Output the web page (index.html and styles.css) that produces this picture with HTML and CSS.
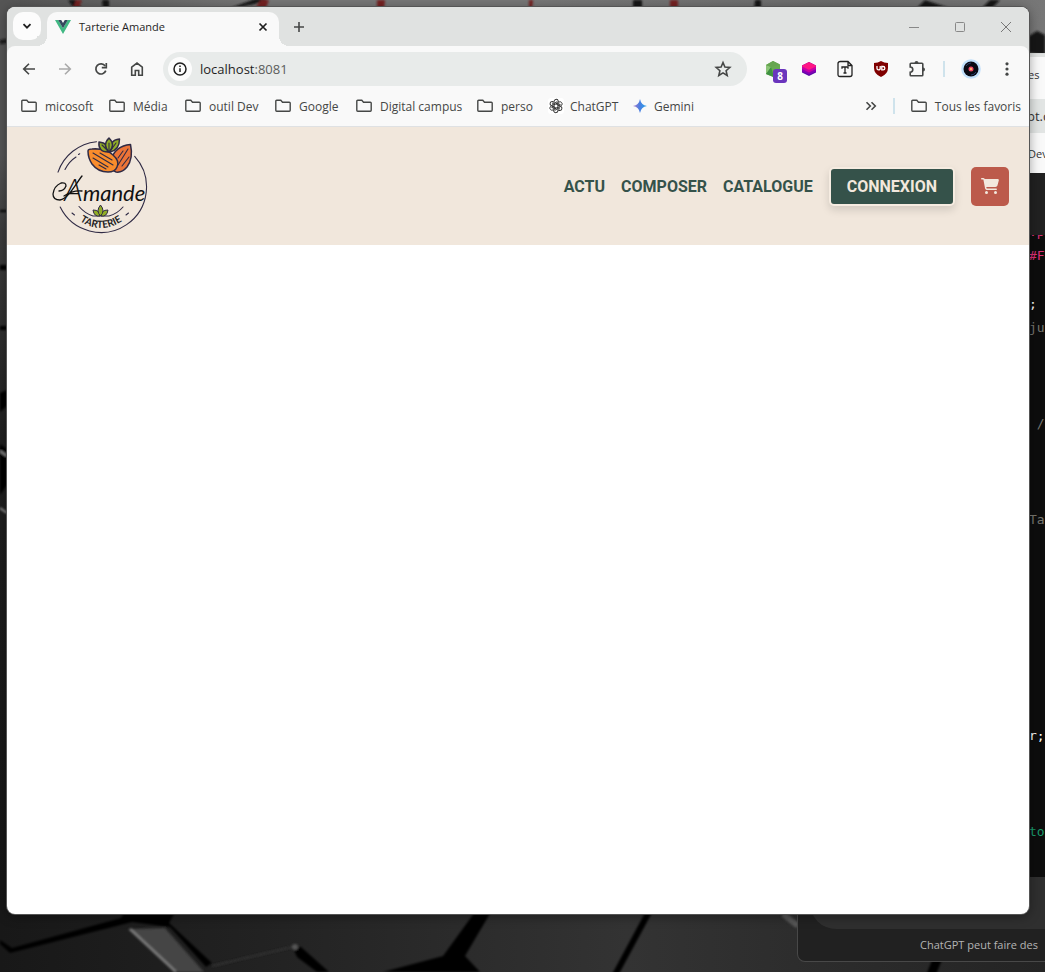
FILE: index.html
```html
<!DOCTYPE html>
<html lang="fr">
<head>
<meta charset="utf-8">
<title>Tarterie Amande</title>
<meta name="viewport" content="width=device-width, initial-scale=1">
<link rel="stylesheet" href="styles.css">
</head>
<body>
<svg width="0" height="0" class="defs" aria-hidden="true">
  <symbol id="folder" viewBox="0 0 16 16"><path d="M.8 3.2q0-.9.9-.9h4.1l1.700 1.900h6.800q.9 0 .9.900v7.200q0 .9-.9.900H1.700q-.9 0-.9-.9z" fill="none" stroke="#454746" stroke-width="1.400"/></symbol>
</svg>
<div class="desktop">
  <svg class="wallpaper" viewBox="0 0 1045 972" preserveAspectRatio="xMidYMid slice" aria-hidden="true">
    <defs>
      <linearGradient id="wl" x1="0" y1="0" x2="0" y2="1"><stop offset="0" stop-color="#555"/><stop offset=".16" stop-color="#555"/><stop offset=".24" stop-color="#3c3c3c"/><stop offset=".45" stop-color="#202020"/><stop offset="1" stop-color="#141414"/></linearGradient>
      <linearGradient id="wt"><stop offset="0" stop-color="#555"/><stop offset=".25" stop-color="#777"/><stop offset=".5" stop-color="#777"/><stop offset=".8" stop-color="#6c6c6c"/><stop offset="1" stop-color="#777"/></linearGradient>
      <linearGradient id="wb"><stop offset="0" stop-color="#181818"/><stop offset=".25" stop-color="#222"/><stop offset=".6" stop-color="#333"/><stop offset="1" stop-color="#242424"/></linearGradient>
      <filter id="soft" x="-5%" y="-5%" width="110%" height="110%"><feGaussianBlur stdDeviation="1"/></filter>
    </defs>
    <rect width="1045" height="972" fill="url(#wl)"/>
    <rect x="7" width="1038" height="70" fill="url(#wt)"/>
    <rect y="900" width="1045" height="72" fill="url(#wb)"/>
    <g filter="url(#soft)">
      <path d="M0 40l7-1v4l-7 1zM68 0h8l7 10h-8zM102 0h7v10h-6zM225 10l30-6 12-5h-12zM633 0h9v10h-9zM755 0h6v10h-7zM925 0l30 10h-40zM990 0h10l-12 12h-10zM1029 53V36l8-5 8 4v20z" fill="#151515"/>
      <path d="M72 10l4-10h6l-4 10zM255 8l6-8h8l-3 8zM377 10V0h8l-1 10zM529 10V0h4l-1 10zM670 10V0h8v10z" fill="#762323"/>
      <path d="M0 210h7v2H0zM0 265h7v5H0zM0 326h7v4H0zM0 393l7-3v16l-7 6zM0 444l7 5v36l-7 10z" fill="#030303"/>
      <path d="M0 451l7 5M0 508l7 5" stroke="#999" stroke-width="2"/>
      <path d="M0 944l10 9 122-31 38 5 36 40 6-4-43-40 10-18h-50l-8 13L12 948l-12-8zM480 905l-37 51-60 16h97l-15-16 30-51zM293 948l8-1 28 25h-12l-20-15z" fill="#000"/>
      <path d="M128 929l50 43h26l-39-44z" fill="#444"/><path d="M130 929l46 43" stroke="#777" stroke-width="3"/>
      <circle cx="295" cy="947" r="3" fill="#555"/><path d="M212 966l80-19" stroke="#303030" stroke-width="2"/>
      <path d="M650 910l-35 65" stroke="#000" stroke-width="6"/><path d="M783 914l15 12" stroke="#555" stroke-width="6"/><path d="M939 955l-8 20" stroke="#000" stroke-width="9"/>
    </g>
  </svg>

  <section class="window back-window" aria-label="ChatGPT">
    <div class="back-tabs"><span>es</span></div>
    <div class="back-address"><span>pt.c</span></div>
    <div class="back-bookmarks"><span>Dev</span></div>
    <div class="back-head"></div>
    <pre class="back-code"><code><span class="pink">.p</span>
<span class="pink">#F</span>

<span class="white">;</span>
ju



 /



Ta








<span class="white">r;</span>



<span class="green">to</span></code></pre>
    <div class="back-composer"></div>
    <p class="back-note">ChatGPT peut faire des</p>
  </section>

  <section class="window browser" aria-label="Navigateur">
    <div class="tabstrip">
      <button class="tab-search" aria-label="Rechercher dans les onglets"><svg viewBox="0 0 12 12" width="12" height="12"><path d="M2.500 4.200L6 7.700l3.500-3.500" fill="none" stroke="#1f1f1f" stroke-width="1.800"/></svg></button>
      <div class="tab">
        <svg viewBox="0 0 16 14" width="16" height="14"><path d="M0 0h3.300L8 8.200 12.700 0H16L8 14z" fill="#41b883"/><path d="M3.200 0h3L8 3l1.800-3h3L8 8.300z" fill="#35495e"/></svg>
        <span class="tab-title">Tarterie Amande</span>
        <button class="plain" aria-label="Fermer l’onglet"><svg viewBox="0 0 12 12" width="12" height="12"><path d="M2.500 2.500l7 7m0-7l-7 7" stroke="#1f1f1f" stroke-width="1.700"/></svg></button>
      </div>
      <button class="plain new-tab" aria-label="Nouvel onglet"><svg viewBox="0 0 12 12" width="12" height="12"><path d="M6 1v10M1 6h10" stroke="#454746" stroke-width="1.600"/></svg></button>
      <div class="captions">
        <button class="plain" aria-label="Réduire"><svg viewBox="0 0 12 12" width="12" height="12"><path d="M1 6.500h10" stroke="#888"/></svg></button>
        <button class="plain" aria-label="Agrandir"><svg viewBox="0 0 12 12" width="12" height="12"><rect x="1.500" y="1.500" width="9" height="9" rx="1" fill="none" stroke="#888"/></svg></button>
        <button class="plain" aria-label="Fermer"><svg viewBox="0 0 12 12" width="12" height="12"><path d="M1 1l10 10M11 1L1 11" stroke="#777"/></svg></button>
      </div>
    </div>

    <div class="toolbar">
      <div class="tools">
        <button class="tool" aria-label="Précédent"><svg viewBox="0 0 16 16" width="16" height="16"><path d="M14 8H3M8 2.700L2.700 8 8 13.300" fill="none" stroke="#454746" stroke-width="1.600"/></svg></button>
        <button class="tool" aria-label="Suivant" disabled><svg viewBox="0 0 16 16" width="16" height="16"><path d="M2 8h11M8 2.700L13.300 8 8 13.300" fill="none" stroke="#aaa" stroke-width="1.600"/></svg></button>
        <button class="tool" aria-label="Actualiser"><svg viewBox="0 0 16 16" width="16" height="16"><path d="M12.800 9.600A5.100 5.100 0 1 1 12.200 5" fill="none" stroke="#454746" stroke-width="1.700"/><path d="M13.300 2v4.700H8.800" fill="none" stroke="#454746" stroke-width="1.700"/></svg></button>
        <button class="tool" aria-label="Accueil"><svg viewBox="0 0 16 16" width="16" height="16"><path d="M2.700 6.200L8 2l5.300 4.200v8H9.700V9.500H6.300v4.700H2.700z" fill="none" stroke="#454746" stroke-width="1.600"/></svg></button>
      </div>
      <div class="omnibox">
        <button class="site-info" aria-label="Infos sur le site"><svg viewBox="0 0 16 16" width="16" height="16"><circle cx="8" cy="8" r="6" fill="none" stroke="#1f1f1f" stroke-width="1.500"/><path d="M8 7.200v3.700M8 4.600v1.500" stroke="#1f1f1f" stroke-width="1.500"/></svg></button>
        <div class="url" role="textbox" aria-label="Adresse">localhost<span>:8081</span></div>
        <button class="plain star" aria-label="Ajouter aux favoris"><svg viewBox="0 0 18 18" width="18" height="18"><path d="M9 2.500l1.900 4.600 4.900.4-3.700 3.200 1.100 4.800L9 12.900l-4.200 2.600 1.100-4.800-3.700-3.200 4.900-.4z" fill="none" stroke="#454746" stroke-width="1.600"/></svg></button>
      </div>
      <div class="tools">
        <button class="tool" aria-label="Extension"><svg viewBox="0 0 16 16" width="16" height="16"><path d="M8 0l7 3.500v8L8 16l-7-3V4z" fill="#67aa51"/><path d="M1 4l5 2-4 7-1-1z" fill="#8cc477"/><path d="M1 13l5-7 3 10z" fill="#3f9142"/><path d="M8 0l7 3.500L6 6 1 4z" fill="#66a550"/></svg><span class="badge">8</span></button>
        <button class="tool" aria-label="Requestly"><svg viewBox="0 0 16 16" width="16" height="16"><path d="M8 1l7 3.500v7L8 15l-7-3.500v-7z" fill="#5d0aa8"/><path d="M1 7.500l7 3 7-3v3l-7 3-7-3z" fill="#8600b4"/><path d="M1 5l7 3.500L15 5v3l-7 3.500L1 8z" fill="#c900a7"/><path d="M8 1l7 3.500v1L8 9 1 5.500v-1z" fill="#ff1684"/></svg></button>
        <button class="tool" aria-label="Texte"><svg viewBox="0 0 16 18" width="16" height="18"><path d="M3.500 1.500h7.500l4 4v9q0 2-2 2H3q-2 0-2-2V3.500q0-2 2.500-2zM11 1.500v4h4" fill="none" stroke="#222" stroke-width="1.300"/><path d="M5 8.800V7h6v1.800M8 7v6M6.500 13h3" fill="none" stroke="#222" stroke-width="1.300"/></svg></button>
        <button class="tool" aria-label="uBlock"><svg viewBox="0 0 16 16" width="16" height="16"><path d="M8 0q3 2 7 2v5q0 6-7 9-7-3-7-9V2q4 0 7-2z" fill="#800000"/><path d="M4 5v2.500q0 1.400 1.600 1.400T7.200 7.500V5" fill="none" stroke="#fff" stroke-width="1.300"/><path d="M8.800 5.500h1.400a1.600 1.600 0 0 1 0 3.300H8.800z" fill="none" stroke="#fff" stroke-width="1.300"/></svg></button>
        <button class="tool" aria-label="Extensions"><svg viewBox="0 0 18 18" width="18" height="18"><path d="M3 3.300h11q.8 0 .8.8v10.800q0 .8-.8.800H3q-.8 0-.8-.8V12.200a2.600 2.600 0 0 0 0-5.200V4.100q0-.8.800-.8z" fill="none" stroke="#454746" stroke-width="1.600"/><path d="M6.500 3.500V3a2 2 0 0 1 4 0v.5zM14.500 7.500h.5a2 2 0 0 1 0 4h-.5z" fill="#454746"/></svg></button>
        <span class="divider wide"></span>
        <button class="tool" aria-label="Profil"><svg viewBox="0 0 20 20" width="20" height="20"><circle cx="10" cy="10" r="9.800" fill="#c2e0fb"/><circle cx="10" cy="10" r="7.500" fill="#090913"/><path d="M5 7a6 6 0 0 1 5-3M15 13a6 6 0 0 1-5 3" stroke="#263b68" fill="none"/><circle cx="10" cy="10" r="2.500" fill="#ef4964"/><circle cx="10" cy="10" r="1" fill="#ffd26b"/></svg></button>
        <button class="tool" aria-label="Menu"><svg viewBox="0 0 16 16" width="16" height="16" fill="#454746"><circle cx="8" cy="2.800" r="1.600"/><circle cx="8" cy="8" r="1.600"/><circle cx="8" cy="13.200" r="1.600"/></svg></button>
      </div>
    </div>

    <nav class="bookmarks" aria-label="Favoris">
      <div class="bookmark-list">
        <a href="#"><svg width="16" height="16"><use href="#folder"/></svg>micosoft</a>
        <a href="#"><svg width="16" height="16"><use href="#folder"/></svg>Média</a>
        <a href="#"><svg width="16" height="16"><use href="#folder"/></svg>outil Dev</a>
        <a href="#"><svg width="16" height="16"><use href="#folder"/></svg>Google</a>
        <a href="#"><svg width="16" height="16"><use href="#folder"/></svg>Digital campus</a>
        <a href="#"><svg width="16" height="16"><use href="#folder"/></svg>perso</a>
        <a href="#" class="site"><svg viewBox="0 0 16 16" width="16" height="16"><rect width="16" height="16" rx="3" fill="#fff"/><g fill="none" stroke="#333" stroke-width="1.200" transform="translate(1.600 1.600) scale(.8)"><path id="petal" d="M8 5.200l3.600-2.100a2.700 2.700 0 0 1 3.700 3.700q-.4.800-1.500 1.200M5.600 9.400V4.800L9.700 2.400"/><use href="#petal" transform="rotate(60 8 8)"/><use href="#petal" transform="rotate(120 8 8)"/><use href="#petal" transform="rotate(180 8 8)"/><use href="#petal" transform="rotate(240 8 8)"/><use href="#petal" transform="rotate(300 8 8)"/></g></svg>ChatGPT</a>
        <a href="#" class="site"><svg viewBox="0 0 16 16" width="16" height="16"><defs><linearGradient id="gem"><stop offset="0" stop-color="#a978c8"/><stop offset=".5" stop-color="#467fe2"/><stop offset="1" stop-color="#28a6e8"/></linearGradient></defs><path d="M8 1q1 6 7 7-6 1-7 7-1-6-7-7 6-1 7-7z" fill="url(#gem)"/></svg>Gemini</a>
      </div>
      <div class="bookmark-end">
        <button class="plain" aria-label="Plus de favoris"><svg viewBox="0 0 12 12" width="12" height="12"><path d="M1.500 2.200L5.300 6 1.500 9.800M6.500 2.200L10.300 6 6.500 9.800" fill="none" stroke="#454746" stroke-width="1.600"/></svg></button>
        <span class="divider"></span>
        <a href="#"><svg width="16" height="16"><use href="#folder"/></svg>Tous les favoris</a>
      </div>
    </nav>

    <main class="page">
      <header class="site-header">
        <a href="#" aria-label="Amande Tarterie">
          <svg class="logo" viewBox="12 11 98 98">
            <g fill="none" stroke="#302b45" stroke-width="1.100" stroke-linecap="round">
              <path d="M19 46.100A45.500 45.500 0 0 1 57.500 15.700M95.700 30.400A45.500 45.500 0 1 1 21.200 81.100"/>
              <path d="M26 43.500q4-8 11-12.500M39.500 28.500l1.200-.7M40 80.500q6 7 14 9.500h16q8-2 14-9"/>
              <path d="M33 87l2.500 2M87 89l2.500-2"/>
            </g>
            <g stroke="#302b45" stroke-width="1.500" stroke-linejoin="round">
              <path d="M91.500 18.500q3 14-3.500 22.500-5 6-11 5-7-2-5-12 4-14 19.500-15.500z" fill="#ec7437"/>
              <path d="M49 25q0-2 4-2 14-1 21 6 7 6 4 12-2 5-9 5-10 0-16-8-4-6-4-13z" fill="#f98c2c"/>
              <path d="M69 26q-10 0-9-10 10 1 9 10zM71 26q-1-12 9.500-13 0 11-9.500 13z" fill="#91ad26"/>
              <path d="M70 26q-7-7 0-14 7 7 0 14z" fill="#91ad26"/>
            </g>
            <path d="M54 27l20 12M61 27l12 7M54 32l15 9M60 39l7 4M89 23L79 39M84 25l-5 7M90 31l-7 9M63 19l5 5M70 17v7M77 17l-5 7" fill="none" stroke="#302b45" stroke-width="1.100" stroke-linecap="round"/>
            <g fill="#91ad26" stroke="#302b45" stroke-width="1"><path d="M61 90q-6 1-7-6 7 0 7 6zM62 90q6 1 7-6-7 0-7 6z"/><path d="M61.500 90q-5-5 0-11 5 6 0 11z"/></g>
            <path d="M43 50C36 59 29 73 21 74q-7 0-7-6 1-8 8-11 5-1 5 3-2 5-7 5M25 70q9-6 18-5" fill="none" stroke="#111" stroke-width="1.300" stroke-linecap="round"/>
            <text class="logo-name" x="25" y="75">A<tspan class="logo-rest">mande</tspan></text>
            <path id="seal" d="M33 89Q62 115 91 89" fill="none"/>
            <text class="logo-sub"><textPath href="#seal" startOffset="50%" text-anchor="middle">TARTERIE</textPath></text>
          </svg>
        </a>
        <nav class="site-nav" aria-label="Navigation principale">
          <a href="#">ACTU</a>
          <a href="#">COMPOSER</a>
          <a href="#">CATALOGUE</a>
          <button class="login">CONNEXION</button>
          <button class="cart" aria-label="Panier"><svg viewBox="0 0 576 512" width="18" height="16"><path d="M0 24C0 10.700 10.700 0 24 0h45.500c22 0 41.500 12.800 50.600 32h411c26.300 0 45.500 25 38.600 50.400l-41 152.300c-8.500 31.400-37 53.300-69.500 53.300H170.700l5.400 28.500c2.200 11.300 12.100 19.500 23.600 19.500H488c13.300 0 24 10.700 24 24s-10.700 24-24 24H199.700c-34.600 0-64.300-24.600-70.700-58.500L77.400 54.500c-.7-3.800-4-6.500-7.900-6.500H24C10.700 48 0 37.300 0 24zm128 440a48 48 0 1 1 96 0 48 48 0 1 1-96 0zm336-48a48 48 0 1 1 0 96 48 48 0 1 1 0-96z" fill="#f2e8dd"/></svg></button>
        </nav>
      </header>
    </main>
  </section>
</div>
</body>
</html>
```

FILE: styles.css
```css
* { box-sizing: border-box; }

body {
  margin: 0;
  background: #222;
  font-family: "Open Sans", "Noto Sans", sans-serif;
  font-size: 12px;
}

a { color: inherit; text-decoration: none; }

button {
  border: 0;
  padding: 0;
  font: inherit;
  background: none;
}

svg { display: block; flex: none; }

.defs { position: absolute; }

.desktop {
  position: relative;
  height: 100vh;
  overflow: hidden;
}

.wallpaper {
  width: 100%;
  height: 100%;
}

.window {
  position: absolute;
  display: flex;
  flex-direction: column;
  overflow: hidden;
  border-radius: 8px;
}

/* Window behind */
.back-window {
  top: 53px;
  bottom: 10px;
  left: 797px;
  right: -400px;
  background: #212121;
  border: 1px solid #484848;
  border-top-color: #d8dad9;
  color: #333;
  font-size: 11px;
  white-space: nowrap;
}

.back-tabs, .back-address, .back-bookmarks {
  display: flex;
  align-items: center;
  flex: none;
  padding-left: 230px;
  background: #f9f9f9;
}

.back-tabs { height: 45px; border-top: 3px solid #e0e2e1; padding-bottom: 8px; }
.back-address { height: 34px; background: #e2e5e4; font-size: 13px; padding-left: 229px; }
.back-bookmarks { height: 40px; }
.back-head { flex: none; height: 62px; }

.back-code {
  flex: 1;
  min-height: 0;
  overflow: hidden;
  margin: 0;
  padding-left: 231px;
  background: #0d0d0d;
  color: #77766f;
  font: 13px/24px "DejaVu Sans Mono", monospace;
}

.back-code code {
  display: block;
  margin-top: -15px;
  font: inherit;
}

.pink { color: #df3079; }
.white { color: #fff; }
.green { color: #1a9b6c; }

.back-composer {
  flex: none;
  height: 52px;
  margin-left: 12px;
  border-radius: 0 0 0 26px;
  background: #2f2f2f;
}

.back-note {
  margin: 0;
  padding: 8px 0 8px 122px;
  line-height: 16px;
  color: #b4b4b4;
}

/* Browser window */
.browser {
  top: 7px;
  right: 16px;
  bottom: 58px;
  left: 7px;
  background: #fff;
  box-shadow: 0 0 0 1px #555, 0 2px 12px #0006;
}

.plain {
  display: flex;
  align-items: center;
  justify-content: center;
}

.tabstrip {
  display: flex;
  flex: none;
  height: 39px;
  padding-left: 6px;
  background: #e0e2e1;
}

.tab-search {
  display: flex;
  align-items: center;
  justify-content: center;
  width: 28px;
  height: 28px;
  margin-top: 5px;
  border-radius: 10px;
  background: #fcfcfc;
}

.tab {
  position: relative;
  display: flex;
  align-items: center;
  gap: 8px;
  width: 232px;
  margin: 5px 0 0 6px;
  padding: 0 10px 5px 8px;
  border-radius: 10px 10px 0 0;
  background: #f9f9f9;
  color: #1f1f1f;
  font-size: 11px;
}

.tab::before, .tab::after {
  content: "";
  position: absolute;
  bottom: 0;
  width: 10px;
  height: 10px;
}

.tab::before { right: 100%; background: radial-gradient(circle at 0 0, #e0e2e1 10px, #f9f9f9 10px); }
.tab::after { left: 100%; background: radial-gradient(circle at 100% 0, #e0e2e1 10px, #f9f9f9 10px); }

.tab-title { flex: 1; }
.new-tab { width: 40px; }

.captions {
  display: flex;
  margin-left: auto;
}

.captions .plain { width: 46px; }

.toolbar {
  position: relative;
  z-index: 0;
  display: flex;
  align-items: center;
  gap: 12px;
  flex: none;
  padding: 6px 8px;
  background: #e0e2e1;
}

.toolbar::before {
  content: "";
  position: absolute;
  z-index: -1;
  inset: 0;
  border-radius: 8px 8px 0 0;
  background: #f9f9f9;
}

.tools {
  display: flex;
  align-items: center;
  gap: 8px;
}

.tool {
  position: relative;
  display: flex;
  align-items: center;
  justify-content: center;
  width: 28px;
  height: 28px;
}

.badge {
  position: absolute;
  right: 0;
  bottom: 0;
  width: 14px;
  border-radius: 3px;
  background: #6a35bd;
  color: #fff;
  font: bold 10px/14px "Open Sans", sans-serif;
  text-align: center;
}

.divider {
  width: 2px;
  height: 16px;
  background: #cfe3ec;
}

.divider.wide { margin: 0 4px; }

.omnibox {
  display: flex;
  align-items: center;
  flex: 1;
  height: 34px;
  padding: 0 12px 0 5px;
  border-radius: 17px;
  background: #e8ebea;
}

.site-info {
  display: flex;
  align-items: center;
  justify-content: center;
  width: 24px;
  height: 24px;
  border-radius: 12px;
  background: #fcfcfc;
}

.url {
  flex: 1;
  margin-left: 8px;
  color: #1f1f1f;
  font-size: 13px;
}

.url span { color: #5b5d5c; }
.star { width: 24px; }

.bookmarks {
  display: flex;
  justify-content: space-between;
  flex: none;
  padding: 0 8px 6px 14px;
  border-bottom: 1px solid #dfe1e3;
  background: #f9f9f9;
  color: #454746;
}

.bookmark-list {
  display: grid;
  grid-template-columns: 88px 76px 90px 81px 121px 71px 84px auto;
}

.bookmarks a, .bookmark-end {
  display: flex;
  align-items: center;
  gap: 8px;
  height: 28px;
  white-space: nowrap;
}

.bookmarks .site { gap: 6px; }
.bookmark-end { gap: 16px; }

/* Site */
.page { flex: 1; }

.site-header {
  display: flex;
  align-items: center;
  justify-content: space-between;
  padding: 10px 20px 10px 44px;
  background: #f1e7dc;
}

.logo { width: 98px; height: 98px; }
.logo-name { font: italic 300 31px Lato, sans-serif; fill: #111; }
.logo-rest { font-size: 22px; font-weight: 400; }
.logo-sub { font: bold 10px Lato, sans-serif; fill: #222; }

.site-nav {
  display: flex;
  align-items: center;
  gap: 16px;
  color: #35524a;
  font: bold 16px/19px Roboto, sans-serif;
}

.login {
  padding: 8px 16px;
  border: 2px solid #f6ece1;
  border-radius: 5px;
  background: #35524a;
  color: #f2e8dd;
  box-shadow: 0 4px 8px #0002;
}

.cart {
  display: flex;
  align-items: center;
  justify-content: center;
  width: 38px;
  height: 39px;
  border-radius: 5px;
  background: #bc5a4b;
}
```
